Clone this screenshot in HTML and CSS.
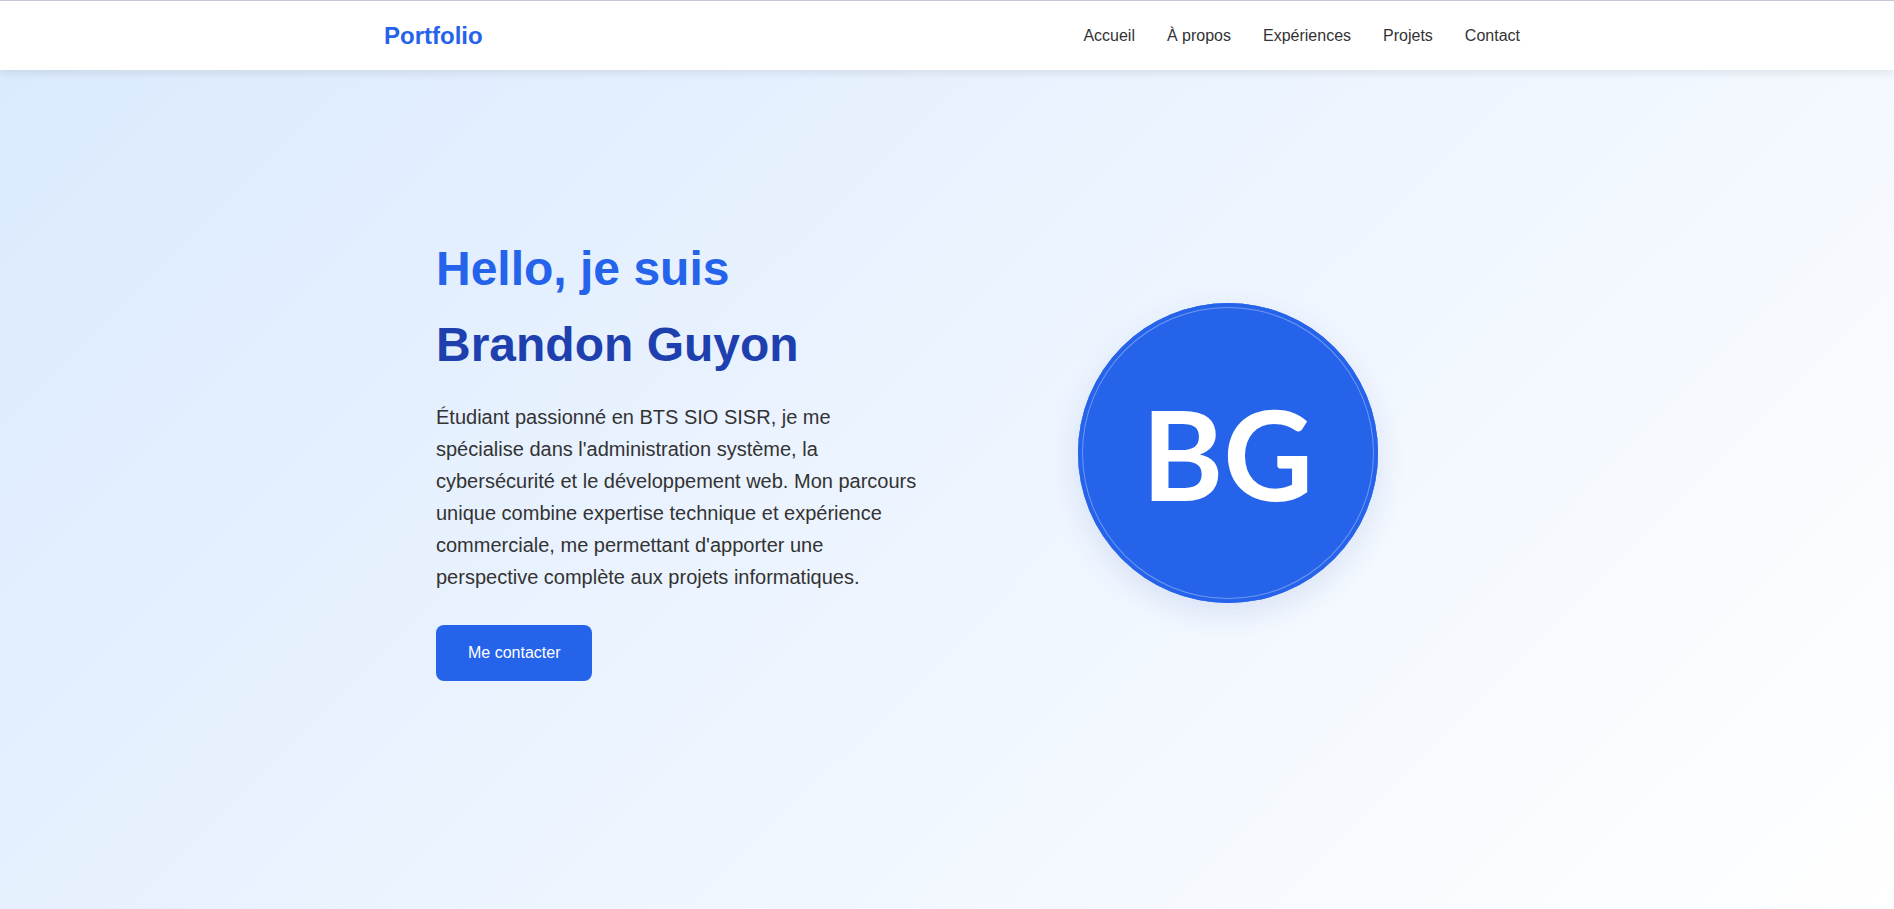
FILE: index.html
```html
<!DOCTYPE html>
<html lang="fr">
<head>
<meta charset="utf-8">
<title>Portfolio - Brandon Guyon</title>
<link rel="stylesheet" href="styles.css">
</head>
<body>
<nav class="navbar">
  <div class="nav-inner">
    <a class="logo" href="#">Portfolio</a>
    <ul class="nav-links">
      <li><a href="#accueil">Accueil</a></li>
      <li><a href="#apropos">À propos</a></li>
      <li><a href="#experiences">Expériences</a></li>
      <li><a href="#projets">Projets</a></li>
      <li><a href="#contact">Contact</a></li>
    </ul>
  </div>
</nav>
<section class="hero" id="accueil">
  <div class="hero-inner">
    <div class="hero-text">
      <h1 class="hello">Hello, je suis</h1>
      <h2 class="name">Brandon Guyon</h2>
      <p class="intro">Étudiant passionné en BTS SIO SISR, je me spécialise dans l'administration système, la cybersécurité et le développement web. Mon parcours unique combine expertise technique et expérience commerciale, me permettant d'apporter une perspective complète aux projets informatiques.</p>
      <a class="btn" href="#contact">Me contacter</a>
    </div>
    <div class="hero-visual">
      <div class="avatar">BG</div>
    </div>
  </div>
</section>
</body>
</html>
```
FILE: styles.css
```css
html, body {
  margin: 0;
  padding: 0;
}
body {
  font-family: "Liberation Sans", Arial, sans-serif;
  background: #ffffff;
  color: #333333;
}
.navbar {
  background: #ffffff;
  border-top: 1px solid #c8c6d8;
  box-shadow: 0 2px 10px rgba(0, 0, 0, 0.1);
  padding-left: 10px;
  position: relative;
  z-index: 2;
}
.nav-inner {
  max-width: 1136px;
  margin: 0 auto;
  height: 69px;
  display: flex;
  align-items: center;
  justify-content: space-between;
}
.logo {
  font-size: 24px;
  font-weight: 700;
  color: #2563eb;
  text-decoration: none;
}
.nav-links {
  display: flex;
  gap: 32px;
  list-style: none;
  margin: 0;
  padding: 0;
}
.nav-links a {
  color: #333333;
  text-decoration: none;
  font-size: 16px;
}
.hero {
  min-height: 839px;
  box-sizing: border-box;
  padding: 169px 0 0 12px;
  background: linear-gradient(135deg, #dbeafe 0%, #ffffff 100%);
}
.hero-inner {
  max-width: 1034px;
  margin: 0 auto;
  display: grid;
  grid-template-columns: 1fr 1fr;
  gap: 64px;
  align-items: center;
}
.hello,
.name {
  font-size: 48px;
  line-height: 60px;
  font-weight: 700;
  margin: 0 0 16px;
}
.hello {
  color: #2563eb;
}
.name {
  color: #1e40af;
  margin-bottom: 26px;
}
.intro {
  font-size: 20px;
  line-height: 32px;
  color: #333333;
  margin: 0 0 32px;
}
.btn {
  display: inline-block;
  padding: 16px 32px;
  background: #2563eb;
  color: #ffffff;
  border-radius: 8px;
  font-size: 16px;
  line-height: 24px;
  text-decoration: none;
  vertical-align: top;
}
.hero-visual {
  display: flex;
  justify-content: center;
  margin-bottom: 14px;
}
.avatar {
  width: 300px;
  height: 300px;
  border-radius: 50%;
  background: #2563eb;
  color: #ffffff;
  display: flex;
  align-items: center;
  justify-content: center;
  font-family: Lato, "Liberation Sans", sans-serif;
  font-weight: 700;
  font-size: 124px;
  line-height: 1;
  box-shadow: inset 0 0 0 4px #2563eb, inset 0 0 0 5px #6f98f0, 0 10px 30px rgba(30, 64, 175, 0.12);
}
```
